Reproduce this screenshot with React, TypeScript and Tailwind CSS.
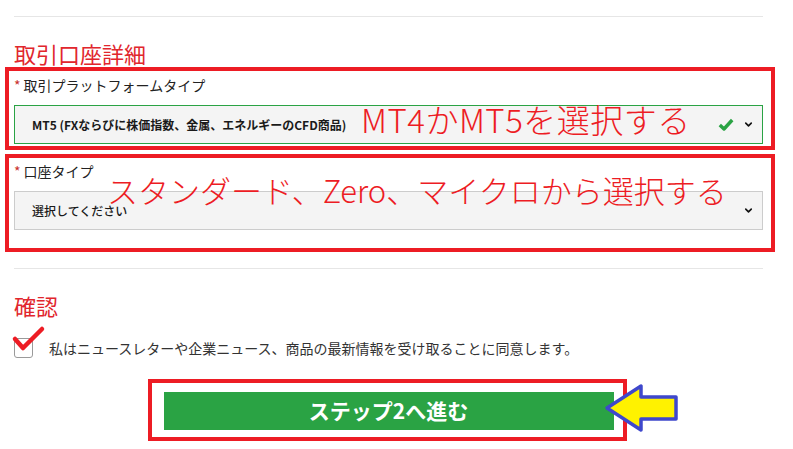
import React from "react";
import { ChevronDown } from "lucide-react";

const jp = '"Noto Sans CJK JP", "Noto Sans", sans-serif';

function SelectBox({ text, valid, bold }: { text: string; valid?: boolean; bold?: boolean }) {
  return (
    <div
      className={`flex h-[39px] w-full items-center justify-between bg-[#f4f4f4] pl-[17px] pr-[8px] border ${
        valid ? "border-[#2aa344]" : "border-[#cccccc]"
      }`}
    >
      <span className={`text-[12px] text-[#1a1a1a] ${bold ? "font-semibold" : "font-medium"}`}>{text}</span>
      <div className="flex items-center gap-[9px]">
        {valid && (
          <svg width="16" height="13" viewBox="0 0 16 13">
            <path d="M1.8 7 L6 11 L14.2 2" fill="none" stroke="#2aa344" strokeWidth="3.4" strokeLinejoin="round" />
          </svg>
        )}
        <ChevronDown size={11} strokeWidth={3.5} className="text-[#111]" />
      </div>
    </div>
  );
}

export default function App() {
  return (
    <div className="relative h-[449px] w-[793px] overflow-hidden bg-white" style={{ fontFamily: jp }}>
      {/* form */}
      <div className="w-[763px] pl-[14px] pt-[16px]">
        <div className="border-t border-[#e6e6e6]" />

        <h2 className="mt-[22px] text-[22px] leading-[28px] text-[#e1262d]">取引口座詳細</h2>

        <div className="mt-[8px] flex items-center text-[14px] leading-[20px] text-[#222]">
          <span className="mr-[3px] text-[#c9302c]">*</span>
          取引プラットフォームタイプ
        </div>
        <div className="mt-[10px]">
          <SelectBox text="MT5 (FXならびに株価指数、金属、エネルギーのCFD商品)" valid bold />
        </div>

        <div className="mt-[17px] flex items-center text-[14px] leading-[20px] text-[#222]">
          <span className="mr-[3px] text-[#c9302c]">*</span>
          口座タイプ
        </div>
        <div className="mt-[10px]">
          <SelectBox text="選択してください" />
        </div>

        <div className="mt-[38px] border-t border-[#e6e6e6]" />

        <h2 className="mt-[22px] text-[22px] leading-[28px] text-[#e1262d]">確認</h2>

        <div className="mt-[19px] flex items-center gap-[16px]">
          <div className="h-[20px] w-[19px] rounded-[3px] border border-[#9a9a9a] bg-white" />
          <span className="text-[14px] leading-[20px] text-[#333]">
            私はニュースレターや企業ニュース、商品の最新情報を受け取ることに同意します。
          </span>
        </div>

        <div className="mt-[34px] flex justify-center">
          <button className="h-[38px] w-[450px] bg-[#2aa344] text-[21px] font-bold text-white">
            ステップ2へ進む
          </button>
        </div>
      </div>

      {/* annotations */}
      <div className="absolute left-[5px] top-[67px] h-[83px] w-[770px] border-[4px] border-[#ed1c24]" />
      <div className="absolute left-[5px] top-[154px] h-[98px] w-[770px] border-[4px] border-[#ed1c24]" />
      <div className="absolute left-[148px] top-[379px] h-[62px] w-[479px] border-[4px] border-[#ed1c24]" />

      <div className="absolute left-[361px] top-[99px] text-[33px] font-light leading-[40px] tracking-[0.5px] text-[#ed1c24]">
        MT4かMT5を選択する
      </div>
      <div className="absolute left-[107px] top-[170px] text-[31px] font-light leading-[40px] text-[#ed1c24]">
        スタンダード、Zero、マイクロから選択する
      </div>

      <svg className="absolute left-0 top-0" width="793" height="449">
        <polyline
          points="15,339 23,348 42,329"
          fill="none"
          stroke="#ed1c24"
          strokeWidth="4.5"
          strokeLinecap="round"
          strokeLinejoin="round"
        />
        <polygon
          points="607,408 641,386 641,397 676,397 676,419 641,419 641,430"
          fill="#fff200"
          stroke="#3f48cc"
          strokeWidth="3.5"
          strokeLinejoin="round"
        />
      </svg>
    </div>
  );
}
